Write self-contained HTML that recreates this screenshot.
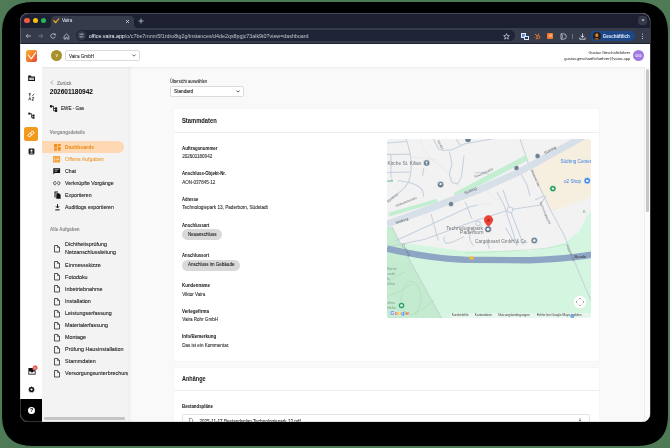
<!DOCTYPE html>
<html><head><meta charset="utf-8">
<style>
*{box-sizing:border-box;margin:0;padding:0}
html,body{width:670px;height:448px;overflow:hidden;background:#4f7a56;font-family:"Liberation Sans",sans-serif}
.a{position:absolute}
.t{position:absolute;white-space:nowrap;line-height:1;-webkit-text-stroke:0.1px currentColor}
.b,.lbl{-webkit-text-stroke:0.04px currentColor}
#frame{left:2px;top:2px;width:666px;height:444px;background:#000;border-radius:26px}
#win{left:20px;top:13px;width:630px;height:408.5px;border-radius:8px;overflow:hidden;background:#f9f9f9}
#P{left:-20px;top:-13px;width:670px;height:448px;will-change:transform}
.b{font-weight:700}
.nav{font-size:5.2px;color:#222}
.task{font-size:5.4px;color:#222}
.lbl{font-size:5.2px;font-weight:700;color:#222;transform-origin:0 0}
.val{font-size:4.55px;color:#333}
svg{position:absolute;overflow:visible}
</style></head>
<body>
<svg style="left:0;top:0" width="670" height="448" viewBox="0 0 670 448"><path d="M634.00 2.00 L638.02 2.04 L640.72 2.16 L643.05 2.36 L645.17 2.63 L647.13 2.99 L648.97 3.42 L650.69 3.94 L652.32 4.53 L653.85 5.20 L655.30 5.94 L656.67 6.77 L657.96 7.67 L659.17 8.64 L660.30 9.70 L661.36 10.83 L662.33 12.04 L663.23 13.33 L664.06 14.70 L664.80 16.15 L665.47 17.68 L666.06 19.31 L666.58 21.03 L667.01 22.87 L667.37 24.83 L667.64 26.95 L667.84 29.28 L667.96 31.98 L668.00 36.00 L668.00 412.00 L667.96 416.02 L667.84 418.72 L667.64 421.05 L667.37 423.17 L667.01 425.13 L666.58 426.97 L666.06 428.69 L665.47 430.32 L664.80 431.85 L664.06 433.30 L663.23 434.67 L662.33 435.96 L661.36 437.17 L660.30 438.30 L659.17 439.36 L657.96 440.33 L656.67 441.23 L655.30 442.06 L653.85 442.80 L652.32 443.47 L650.69 444.06 L648.97 444.58 L647.13 445.01 L645.17 445.37 L643.05 445.64 L640.72 445.84 L638.02 445.96 L634.00 446.00 L36.00 446.00 L31.98 445.96 L29.28 445.84 L26.95 445.64 L24.83 445.37 L22.87 445.01 L21.03 444.58 L19.31 444.06 L17.68 443.47 L16.15 442.80 L14.70 442.06 L13.33 441.23 L12.04 440.33 L10.83 439.36 L9.70 438.30 L8.64 437.17 L7.67 435.96 L6.77 434.67 L5.94 433.30 L5.20 431.85 L4.53 430.32 L3.94 428.69 L3.42 426.97 L2.99 425.13 L2.63 423.17 L2.36 421.05 L2.16 418.72 L2.04 416.02 L2.00 412.00 L2.00 36.00 L2.04 31.98 L2.16 29.28 L2.36 26.95 L2.63 24.83 L2.99 22.87 L3.42 21.03 L3.94 19.31 L4.53 17.68 L5.20 16.15 L5.94 14.70 L6.77 13.33 L7.67 12.04 L8.64 10.83 L9.70 9.70 L10.83 8.64 L12.04 7.67 L13.33 6.77 L14.70 5.94 L16.15 5.20 L17.68 4.53 L19.31 3.94 L21.03 3.42 L22.87 2.99 L24.83 2.63 L26.95 2.36 L29.28 2.16 L31.98 2.04 L36.00 2.00Z" fill="#000"/></svg>
<div id="win" class="a"><div id="P" class="a">
  <!-- ============ TAB BAR ============ -->
  <div class="a" style="left:20px;top:13px;width:630px;height:15px;background:#1d2030"></div>
  <div class="a" style="left:24px;top:17.9px;width:5.6px;height:5.6px;border-radius:50%;background:#f05a45"></div>
  <div class="a" style="left:32.7px;top:17.9px;width:5.6px;height:5.6px;border-radius:50%;background:#f5c30a"></div>
  <div class="a" style="left:40.6px;top:17.9px;width:5.6px;height:5.6px;border-radius:50%;background:#25b75a"></div>
  <!-- active tab -->
  <div class="a" style="left:47px;top:24px;width:91px;height:4.5px;background:#353b4b"></div>
  <div class="a" style="left:47px;top:20px;width:4px;height:8.2px;background:#1d2030;border-bottom-right-radius:4px"></div>
  <div class="a" style="left:134px;top:20px;width:4px;height:8.2px;background:#1d2030;border-bottom-left-radius:4px"></div>
  <div class="a" style="left:51px;top:16px;width:83px;height:13px;background:#353b4b;border-radius:4px 4px 0 0"></div>
  <svg style="left:53px;top:17.8px" width="6.5" height="5.5" viewBox="0 0 6.5 5.5"><defs><linearGradient id="fg" x1="0" y1="1" x2="1" y2="0"><stop offset="0" stop-color="#f7c51b"/><stop offset="1" stop-color="#f08a2a"/></linearGradient></defs><path d="M0.8 2.6 L2.6 4.6 L5.8 0.7" fill="none" stroke="url(#fg)" stroke-width="1.2" stroke-linecap="round" stroke-linejoin="round"/></svg>
  <div class="t" style="left:61.9px;top:18.9px;font-size:4.55px;color:#e3e6ec;-webkit-text-stroke:0.03px currentColor">Vaira</div>
  <svg style="left:125px;top:18.5px" width="5" height="5" viewBox="0 0 5 5"><path d="M1 1L4 4M4 1L1 4" stroke="#d8dbe2" stroke-width="0.8"/></svg>
  <svg style="left:137.5px;top:18px" width="6" height="6" viewBox="0 0 6 6"><path d="M3 0.5V5.5M0.5 3H5.5" stroke="#c8ccd5" stroke-width="0.8"/></svg>
  <div class="a" style="left:638.3px;top:16.2px;width:9px;height:9px;border-radius:3px;background:#343a4a"></div>
  <svg style="left:640.8px;top:19px" width="4" height="3" viewBox="0 0 4 3"><path d="M0.3 0.5L2 2.3L3.7 0.5" fill="#d0d4dc" /></svg>

  <!-- ============ TOOLBAR ============ -->
  <div class="a" style="left:20px;top:28px;width:630px;height:15.2px;background:#353b4b"></div>
  <div class="a" style="left:20px;top:43px;width:630px;height:1.2px;background:#1e2230"></div>
  <!-- nav icons -->
  <svg style="left:24.5px;top:33px" width="7" height="6" viewBox="0 0 7 6"><path d="M6 3H1.2M3.2 1L1.2 3L3.2 5" fill="none" stroke="#c9cdd6" stroke-width="0.75"/></svg>
  <svg style="left:37px;top:33px" width="7" height="6" viewBox="0 0 7 6"><path d="M1 3H5.8M3.8 1L5.8 3L3.8 5" fill="none" stroke="#7d8290" stroke-width="0.75"/></svg>
  <svg style="left:50.3px;top:33px" width="6" height="6" viewBox="0 0 6 6"><path d="M4.9 1.9A2.2 2.2 0 1 0 5.2 3.4" fill="none" stroke="#c9cdd6" stroke-width="0.75"/><path d="M3.7 0.9H5.3V2.5" fill="none" stroke="#c9cdd6" stroke-width="0.75"/></svg>
  <svg style="left:63px;top:32.5px" width="7" height="7" viewBox="0 0 7 7"><path d="M1.1 3.1L3.5 1L5.9 3.1V6.1H4.2V4.4H2.8V6.1H1.1Z" fill="none" stroke="#c9cdd6" stroke-width="0.75" stroke-linejoin="round"/></svg>
  <!-- omnibox -->
  <div class="a" style="left:76px;top:30px;width:439px;height:11.4px;border-radius:6px;background:#1f2536"></div>
  <div class="a" style="left:76.8px;top:31.3px;width:9px;height:9px;border-radius:50%;background:#343a4b"></div>
  <svg style="left:78.8px;top:33.3px" width="5" height="5" viewBox="0 0 5 5"><path d="M0.3 1.2H2.2M3.6 1.2H4.7M0.3 3.8H1.3M2.8 3.8H4.7" stroke="#c9cdd6" stroke-width="0.6"/><circle cx="2.9" cy="1.2" r="0.7" fill="none" stroke="#c9cdd6" stroke-width="0.5"/><circle cx="2.1" cy="3.8" r="0.7" fill="none" stroke="#c9cdd6" stroke-width="0.5"/></svg>
  <div class="t" style="left:88.7px;top:34px;font-size:5.35px;color:#c2c6cf;-webkit-text-stroke:0px currentColor"><span style="color:#f4f6fa">office.vaira.app</span>/o/c7be7mnm5f1rdro8tg2g/instances/d4de2qs8pgjc73alk9t0?view=dashboard</div>
  <svg style="left:503.3px;top:32.8px" width="7" height="7" viewBox="0 0 7 7"><path d="M3.5 0.6L4.3 2.6L6.4 2.7L4.8 4L5.3 6.2L3.5 5L1.7 6.2L2.2 4L0.6 2.7L2.7 2.6Z" fill="none" stroke="#d5d8df" stroke-width="0.7" stroke-linejoin="round"/></svg>
  <!-- extensions -->
  <div class="a" style="left:521.3px;top:33.4px;width:5px;height:4.5px;background:#5b8ee0;border:0.7px solid #dfe6f2"></div>
  <div class="a" style="left:524.2px;top:36.3px;width:4.5px;height:3.8px;background:#1f3a66;border:0.6px solid #dfe6f2"></div>
  <svg style="left:533.5px;top:32.5px" width="7" height="7" viewBox="0 0 7 7"><path d="M1 1L3.6 3.4M1.2 4.2L0.6 4.8M4.3 0.7V2.5M5.8 1.5" stroke="#f57a2a" stroke-width="0.9" fill="none"/><circle cx="4.3" cy="4.1" r="1.5" fill="none" stroke="#f57a2a" stroke-width="0.9"/><path d="M3.3 5.2L1.8 6.4" stroke="#f57a2a" stroke-width="0.9"/></svg>
  <div class="a" style="left:546.9px;top:32.8px;width:6.3px;height:6.3px;border-radius:1px;background:#f5782b"></div>
  <svg style="left:547.5px;top:33.4px" width="5" height="5" viewBox="0 0 5 5"><path d="M1 4L2.5 1L4 4M1.7 3H3.3" stroke="#fde2cf" stroke-width="0.6" fill="none"/></svg>
  <svg style="left:559.5px;top:32.8px" width="7" height="7" viewBox="0 0 7 7"><path d="M1 0.8H3.6A2.7 2.7 0 0 1 3.6 6.2H1Z" fill="none" stroke="#b8bcc5" stroke-width="0.9"/><path d="M1 0.8L2.4 2V5L1 6.2" fill="none" stroke="#b8bcc5" stroke-width="0.7"/></svg>
  <div class="a" style="left:572px;top:34px;width:0.7px;height:4.5px;background:#6a707d"></div>
  <svg style="left:578.5px;top:32.5px" width="7" height="7" viewBox="0 0 7 7"><path d="M3.5 0.5V4.3M1.8 2.8L3.5 4.4L5.2 2.8" fill="none" stroke="#d5d8df" stroke-width="0.9"/><path d="M0.8 4.6V6.2H6.2V4.6" fill="none" stroke="#d5d8df" stroke-width="0.9"/></svg>
  <!-- profile pill -->
  <div class="a" style="left:590px;top:30.8px;width:44.5px;height:10.7px;border-radius:5.4px;background:#1d4787"></div>
  <div class="a" style="left:593.1px;top:32.3px;width:7.6px;height:7.6px;border-radius:50%;background:#2a2016"></div>
  <svg style="left:593.1px;top:32.3px" width="7.6" height="7.6" viewBox="0 0 7.6 7.6"><ellipse cx="3.8" cy="3.2" rx="1.5" ry="1.9" fill="#d9853c"/><path d="M1.6 7.4Q3.8 4.6 6 7.4Z" fill="#b8652a"/></svg>
  <div class="t b" style="left:602.8px;top:35.30px;font-size:4.5px;color:#d6e3fb">Geschäftlich</div>
  <svg style="left:640.8px;top:33px" width="3" height="7" viewBox="0 0 3 7"><circle cx="1.5" cy="1" r="0.55" fill="#c9cdd6"/><circle cx="1.5" cy="3.2" r="0.55" fill="#c9cdd6"/><circle cx="1.5" cy="5.4" r="0.55" fill="#c9cdd6"/></svg>

  <!-- ============ APP HEADER ============ -->
  <div class="a" style="left:20px;top:44.2px;width:630px;height:22.8px;background:#fff"></div>
  <!-- logo -->
  <div class="a" style="left:25.8px;top:50px;width:11.4px;height:11.6px;border-radius:2px;background:linear-gradient(135deg,#f9b233 0%,#f0782c 55%,#e8403a 100%)"></div>
  <svg style="left:25.8px;top:50px" width="12" height="12" viewBox="0 0 12 12"><path d="M2.2 5L5.3 8.8L9.6 2.6" fill="none" stroke="#fff" stroke-width="1.15" stroke-linecap="round" stroke-linejoin="round" opacity="0.95"/></svg>
  <!-- org avatar -->
  <div class="a" style="left:51.3px;top:50.2px;width:11.2px;height:11.2px;border-radius:50%;background:#a8902a"></div>
  <div class="t b" style="left:55.4px;top:53.8px;font-size:4px;color:#f2ead2">V</div>
  <!-- org select -->
  <div class="a" style="left:65.4px;top:50.4px;width:74.3px;height:11.1px;border-radius:2px;background:#fff;border:0.6px solid #dcdcdc"></div>
  <div class="t" style="left:68.9px;top:54.7px;font-size:4.9px;color:#333;transform-origin:0 0;--w:25.1px;transform:scaleX(0.9455)">Vaira GmbH</div>
  <svg style="left:131.8px;top:54.4px" width="4" height="3" viewBox="0 0 4 3"><path d="M0.4 0.5L2 2.2L3.6 0.5" fill="none" stroke="#444" stroke-width="0.8"/></svg>
  <!-- user -->
  <div class="t" style="left:588.4px;top:51.2px;font-size:3.96px;color:#333;-webkit-text-stroke:0.02px currentColor">Gustav Geschäftsführer</div>
  <div class="t" style="left:564.3px;top:56.9px;font-size:4.05px;color:#333;-webkit-text-stroke:0.02px currentColor">gustav.geschaeftsfuehrer@vaira.app</div>
  <div class="a" style="left:633px;top:49.6px;width:11.4px;height:11.4px;border-radius:50%;background:#a07ae0"></div>
  <div class="t b" style="left:635.3px;top:53.6px;font-size:4px;color:#efe8fb">GG</div>

  <!-- ============ LEFT ICON STRIP ============ -->
  <div class="a" style="left:20px;top:67px;width:22.2px;height:355px;background:#fff"></div>
  <div class="a" style="left:20px;top:398.8px;width:22.2px;height:23px;background:#000"></div>
  
  <!-- strip icons -->
  <svg style="left:28px;top:75px" width="7.2" height="6.4" viewBox="0 0 7.2 6.4"><path d="M0.2 0.6H2.8L3.5 1.4H7V6H0.2Z" fill="#111"/><path d="M1.3 2.6H5.9V5H1.3Z" fill="#fff" opacity="0.85"/><path d="M3.2 3.8H5" stroke="#111" stroke-width="0.5"/></svg>
  <svg style="left:28px;top:92.8px" width="7" height="8" viewBox="0 0 7 8"><path d="M0.6 0.8H3M1.8 0.8V3.4M4.2 3.2L6.2 0.8M0.6 7.2L1.8 4.6L3 7.2M4.2 4.6H5.8L4.2 7.2H5.8" fill="none" stroke="#1a1a1a" stroke-width="0.75"/></svg>
  <svg style="left:28px;top:111.8px" width="7" height="7" viewBox="0 0 7 7"><rect x="0.3" y="0.6" width="2" height="2" fill="#1a1a1a"/><rect x="4.5" y="2.5" width="2" height="2" fill="#1a1a1a"/><rect x="4.5" y="4.7" width="2" height="2" fill="#1a1a1a"/><path d="M2 1.6H3.5V5.7H4.8M3.5 3.5H4.8" fill="none" stroke="#1a1a1a" stroke-width="0.7"/></svg>
  <div class="a" style="left:24.3px;top:127.2px;width:14px;height:14px;border-radius:2.5px;background:#f39a1e"></div>
  <svg style="left:27.3px;top:130.2px" width="8" height="8" viewBox="0 0 8 8"><g transform="rotate(-40 4 4)" fill="none" stroke="#fff" stroke-width="0.9"><rect x="0.6" y="2.7" width="3.8" height="2.6" rx="1.3"/><rect x="3.6" y="2.7" width="3.8" height="2.6" rx="1.3"/></g></svg>
  <svg style="left:28px;top:147.5px" width="7" height="7" viewBox="0 0 7 7"><rect x="0.6" y="0.6" width="5.8" height="5.8" rx="0.8" fill="#1a1a1a"/><circle cx="3.5" cy="2.7" r="1.1" fill="#fff"/><path d="M1.6 5.6Q3.5 3.6 5.4 5.6Z" fill="#fff"/></svg>
  <svg style="left:27.6px;top:364.6px" width="10" height="10" viewBox="0 0 10 10"><path d="M0.4 3H7.6V9.6H0.4Z" fill="#111"/><path d="M1.2 6.6H2.7L3.3 7.5H4.7L5.3 6.6H6.8V8.8H1.2Z" fill="#fff"/><circle cx="7.2" cy="2.8" r="2.5" fill="#e53935" stroke="#fff" stroke-width="0.4"/><path d="M6.5 1.7V4M7.9 1.7V4" stroke="#fff" stroke-width="0.5"/></svg>
  <svg style="left:28px;top:385.5px" width="7" height="7" viewBox="0 0 7 7"><path d="M3.5 0.2L4.3 1.2L5.6 1.1L5.7 2.4L6.8 3.1L6 4.1L6.3 5.4L5 5.6L4.4 6.8L3.5 6L2.6 6.8L2 5.6L0.7 5.4L1 4.1L0.2 3.1L1.3 2.4L1.4 1.1L2.7 1.2Z" fill="#111"/><circle cx="3.5" cy="3.5" r="1.1" fill="#fff"/></svg>
  <div class="a" style="left:27.9px;top:406.6px;width:7.4px;height:7.4px;border-radius:50%;background:#fff"></div>
  <div class="t b" style="left:29.9px;top:407.9px;font-size:5.2px;color:#000">?</div>


  <!-- ============ SECONDARY SIDEBAR ============ -->
  <div class="a" style="left:42.2px;top:67px;width:85.5px;height:355px;background:#f3f3f3"></div>
  <div class="a" style="left:127.7px;top:67px;width:4px;height:355px;background:linear-gradient(90deg,#ececec,rgba(249,249,249,0))"></div>
  
  <svg style="left:50.4px;top:80.4px" width="4" height="5" viewBox="0 0 4 5"><path d="M2.8 0.6L1 2.5L2.8 4.4" fill="none" stroke="#666" stroke-width="0.6"/></svg>
  <div class="t" style="left:56.9px;top:81.9px;font-size:4.78px;color:#7a7a7a">Zurück</div>
  <div class="t b" style="left:49.8px;top:88.8px;font-size:6.53px;color:#111">202601180942</div>
  <svg style="left:50.4px;top:104.5px" width="7.2" height="7" viewBox="0 0 7.2 7"><rect x="0" y="0.2" width="2.2" height="2.2" fill="#111"/><rect x="5" y="2.4" width="2.2" height="2.2" fill="#111"/><rect x="5" y="4.7" width="2.2" height="2.2" fill="#111"/><path d="M2 1.3H3.6V5.8H5M3.6 3.5H5" fill="none" stroke="#111" stroke-width="0.8"/></svg>
  <div class="t" style="left:61.4px;top:106.0px;font-size:5px;color:#222;transform-origin:0 0;--w:23px;transform:scaleX(0.9194)">EWE - Gas</div>
  <div class="t b" style="left:49.8px;top:130.60px;font-size:4.57px;color:#8a8a8a">Vorgangsdetails</div>
  <div class="a" style="left:42.2px;top:141.1px;width:81.8px;height:12px;border-radius:0 6px 6px 0;background:#fdd8b2"></div>
  <svg style="left:53.6px;top:143.5px" width="7" height="7" viewBox="0 0 7 7"><rect x="0" y="0" width="3" height="3.6" fill="#ef8f1a"/><rect x="3.7" y="0" width="3" height="2" fill="#ef8f1a"/><rect x="0" y="4.3" width="3" height="2.3" fill="#ef8f1a"/><rect x="3.7" y="2.7" width="3" height="3.9" fill="#ef8f1a"/></svg>
  <div class="t b" style="left:65.1px;top:144.5px;font-size:5.03px;color:#e98c17">Dashboards</div>
  <svg style="left:53.4px;top:155.8px" width="7.2" height="6.4" viewBox="0 0 7.2 6.4"><rect x="0" y="0" width="7.2" height="6.4" rx="0.6" fill="#f2a33c"/><path d="M1.5 1.6V4.8M2.8 3.2H5.6M4.6 2.2L5.7 3.2L4.6 4.2" fill="none" stroke="#fff" stroke-width="0.6"/></svg>
  <div class="t" style="left:65.1px;top:156.70px;font-size:5.2px;color:#f0a03a">Offene Aufgaben</div>
  <svg style="left:53.1px;top:167.8px" width="7.4" height="6.6" viewBox="0 0 7.4 6.6"><path d="M0.3 0.3H7.1V5H1.6L0.3 6.4Z" fill="#111"/><path d="M1.6 1.7H5.6M1.6 3.2H4.2" stroke="#fff" stroke-width="0.6"/></svg>
  <div class="t nav" style="left:65.1px;top:169.40px">Chat</div>
  <svg style="left:53px;top:181px" width="7.6" height="4.4" viewBox="0 0 7.6 4.4"><path d="M3 0.6H2.2A1.6 1.6 0 0 0 2.2 3.8H3M4.6 0.6H5.4A1.6 1.6 0 0 1 5.4 3.8H4.6M2.4 2.2H5.2" fill="none" stroke="#222" stroke-width="0.7"/></svg>
  <div class="t nav" style="left:65.1px;top:180.6px">Verknüpfte Vorgänge</div>
  <svg style="left:53.5px;top:191px" width="7" height="8" viewBox="0 0 7 8"><path d="M0.5 0.5H4V1.5H1.5V6.5H0.5Z" fill="#111"/><path d="M2.3 2.2H5L6.6 3.8V7.8H2.3Z" fill="#111"/></svg>
  <div class="t nav" style="left:65.1px;top:192.5px">Exportieren</div>
  <svg style="left:54.5px;top:204.2px" width="5" height="6.6" viewBox="0 0 5 6.6"><path d="M2.5 0.2V3.6M0.9 2.3L2.5 4L4.1 2.3" fill="none" stroke="#111" stroke-width="1"/><rect x="0.3" y="5.4" width="4.4" height="1" fill="#111"/></svg>
  <div class="t nav" style="left:65.1px;top:204.7px">Auditlogs exportieren</div>
  <div class="t b" style="left:50.1px;top:227.5px;font-size:4.43px;color:#8a8a8a">Alle Aufgaben</div>
  <div class="a" style="left:42.2px;top:236px;width:85.5px;height:183px;overflow:hidden">
  </div>
  <svg style="left:54.1px;top:244.95px" width="6" height="7.5" viewBox="0 0 6 7.5"><path d="M0.5 0.5H3.6L5.5 2.4V7H0.5Z" fill="none" stroke="#222" stroke-width="0.75" stroke-linejoin="round"/><path d="M3.5 0.5V2.5H5.5" fill="none" stroke="#222" stroke-width="0.6"/></svg>
  <svg style="left:54.1px;top:261.25px" width="6" height="7.5" viewBox="0 0 6 7.5"><path d="M0.5 0.5H3.6L5.5 2.4V7H0.5Z" fill="none" stroke="#222" stroke-width="0.75" stroke-linejoin="round"/><path d="M3.5 0.5V2.5H5.5" fill="none" stroke="#222" stroke-width="0.6"/></svg>
  <svg style="left:54.1px;top:273.35px" width="6" height="7.5" viewBox="0 0 6 7.5"><path d="M0.5 0.5H3.6L5.5 2.4V7H0.5Z" fill="none" stroke="#222" stroke-width="0.75" stroke-linejoin="round"/><path d="M3.5 0.5V2.5H5.5" fill="none" stroke="#222" stroke-width="0.6"/></svg>
  <svg style="left:54.1px;top:285.45px" width="6" height="7.5" viewBox="0 0 6 7.5"><path d="M0.5 0.5H3.6L5.5 2.4V7H0.5Z" fill="none" stroke="#222" stroke-width="0.75" stroke-linejoin="round"/><path d="M3.5 0.5V2.5H5.5" fill="none" stroke="#222" stroke-width="0.6"/></svg>
  <svg style="left:54.1px;top:297.55px" width="6" height="7.5" viewBox="0 0 6 7.5"><path d="M0.5 0.5H3.6L5.5 2.4V7H0.5Z" fill="none" stroke="#222" stroke-width="0.75" stroke-linejoin="round"/><path d="M3.5 0.5V2.5H5.5" fill="none" stroke="#222" stroke-width="0.6"/></svg>
  <svg style="left:54.1px;top:309.65px" width="6" height="7.5" viewBox="0 0 6 7.5"><path d="M0.5 0.5H3.6L5.5 2.4V7H0.5Z" fill="none" stroke="#222" stroke-width="0.75" stroke-linejoin="round"/><path d="M3.5 0.5V2.5H5.5" fill="none" stroke="#222" stroke-width="0.6"/></svg>
  <svg style="left:54.1px;top:321.75px" width="6" height="7.5" viewBox="0 0 6 7.5"><path d="M0.5 0.5H3.6L5.5 2.4V7H0.5Z" fill="none" stroke="#222" stroke-width="0.75" stroke-linejoin="round"/><path d="M3.5 0.5V2.5H5.5" fill="none" stroke="#222" stroke-width="0.6"/></svg>
  <svg style="left:54.1px;top:333.85px" width="6" height="7.5" viewBox="0 0 6 7.5"><path d="M0.5 0.5H3.6L5.5 2.4V7H0.5Z" fill="none" stroke="#222" stroke-width="0.75" stroke-linejoin="round"/><path d="M3.5 0.5V2.5H5.5" fill="none" stroke="#222" stroke-width="0.6"/></svg>
  <svg style="left:54.1px;top:345.95px" width="6" height="7.5" viewBox="0 0 6 7.5"><path d="M0.5 0.5H3.6L5.5 2.4V7H0.5Z" fill="none" stroke="#222" stroke-width="0.75" stroke-linejoin="round"/><path d="M3.5 0.5V2.5H5.5" fill="none" stroke="#222" stroke-width="0.6"/></svg>
  <svg style="left:54.1px;top:358.05px" width="6" height="7.5" viewBox="0 0 6 7.5"><path d="M0.5 0.5H3.6L5.5 2.4V7H0.5Z" fill="none" stroke="#222" stroke-width="0.75" stroke-linejoin="round"/><path d="M3.5 0.5V2.5H5.5" fill="none" stroke="#222" stroke-width="0.6"/></svg>
  <svg style="left:54.1px;top:370.15px" width="6" height="7.5" viewBox="0 0 6 7.5"><path d="M0.5 0.5H3.6L5.5 2.4V7H0.5Z" fill="none" stroke="#222" stroke-width="0.75" stroke-linejoin="round"/><path d="M3.5 0.5V2.5H5.5" fill="none" stroke="#222" stroke-width="0.6"/></svg>
  <div class="t task" style="left:65.1px;top:241.60px;max-width:62.6px;overflow:hidden">Dichtheitsprüfung</div>
  <div class="t task" style="left:65.1px;top:250.10px;max-width:62.6px;overflow:hidden">Netzanschlussleitung</div>
  <div class="t task" style="left:65.1px;top:262.50px;max-width:62.6px;overflow:hidden">Einmessskizze</div>
  <div class="t task" style="left:65.1px;top:274.60px;max-width:62.6px;overflow:hidden">Fotodoku</div>
  <div class="t task" style="left:65.1px;top:286.70px;max-width:62.6px;overflow:hidden">Inbetriebnahme</div>
  <div class="t task" style="left:65.1px;top:298.80px;max-width:62.6px;overflow:hidden">Installation</div>
  <div class="t task" style="left:65.1px;top:310.90px;max-width:62.6px;overflow:hidden">Leistungserfassung</div>
  <div class="t task" style="left:65.1px;top:323.00px;max-width:62.6px;overflow:hidden">Materialerfassung</div>
  <div class="t task" style="left:65.1px;top:335.10px;max-width:62.6px;overflow:hidden">Montage</div>
  <div class="t task" style="left:65.1px;top:347.20px;max-width:62.6px;overflow:hidden">Prüfung Hausinstallation</div>
  <div class="t task" style="left:65.1px;top:359.30px;max-width:62.6px;overflow:hidden">Stammdaten</div>
  <div class="t task" style="left:65.1px;top:371.40px;max-width:62.6px;overflow:hidden">Versorgungsunterbrechung</div>
  <div class="a" style="left:44px;top:417.4px;width:81.2px;height:2.4px;border-radius:1.2px;background:#c5c5c5"></div>


  <!-- ============ MAIN ============ -->
  
  <div class="t" style="left:170.1px;top:80.3px;font-size:4.8px;color:#333;transform-origin:0 0;--w:37.2px;transform:scaleX(0.8354)">Übersicht auswählen</div>
  <div class="a" style="left:170.1px;top:85.7px;width:73.6px;height:11.5px;border-radius:2px;background:#fff;border:0.6px solid #dcdcdc"></div>
  <div class="t" style="left:173.6px;top:88.6px;font-size:5px;color:#222;transform-origin:0 0;--w:19.1px;transform:scaleX(0.9410)">Standard</div>
  <svg style="left:236.4px;top:89.9px" width="4" height="3" viewBox="0 0 4 3"><path d="M0.4 0.5L2 2.2L3.6 0.5" fill="none" stroke="#333" stroke-width="0.8"/></svg>
  <!-- card 1 -->
  <div class="a" style="left:173.5px;top:109.4px;width:425.6px;height:251.4px;background:#fff;border-radius:2px;box-shadow:0 0 2px rgba(0,0,0,0.06)"></div>
  <div class="a" style="left:173.5px;top:131.8px;width:425.6px;height:0.7px;background:#eeeeee"></div>
  <div class="t b" style="left:182.2px;top:117.6px;font-size:6.5px;color:#222;transform-origin:0 0;--w:34.8px;transform:scaleX(0.8920)">Stammdaten</div>
  <div class="t lbl" style="left:182px;top:145.80px;--w:35.5px;transform:scaleX(0.8493)">Auftragsnummer</div>
  <div class="t val" style="left:182.2px;top:155.1px">202601180942</div>
  <div class="t lbl" style="left:182px;top:171.20px;--w:43.9px;transform:scaleX(0.8320)">Anschluss-Objekt-Nr.</div>
  <div class="t val" style="left:182.2px;top:180.70px">AON-037845-12</div>
  <div class="t lbl" style="left:182px;top:196.80px;--w:16.2px;transform:scaleX(0.7908)">Adresse</div>
  <div class="t val" style="left:182.2px;top:206.30px;font-size:4.66px">Technologiepark 13, Paderborn, Südstadt</div>
  <div class="t lbl" style="left:182px;top:222.70px;--w:27.3px;transform:scaleX(0.8304)">Anschlussart</div>
  <div class="a" style="left:182.1px;top:229.3px;width:39.8px;height:11px;border-radius:5.5px;background:#d9d9d9"></div>
  <div class="t val" style="left:187.9px;top:233.00px;font-size:4.9px;color:#222;transform-origin:0 0;--w:28.5px;transform:scaleX(0.9273)">Neuanschluss</div>
  <div class="t lbl" style="left:182px;top:252.80px;--w:27.1px;transform:scaleX(0.8173)">Anschlussort</div>
  <div class="a" style="left:182.1px;top:259.5px;width:57.9px;height:11px;border-radius:5.5px;background:#d9d9d9"></div>
  <div class="t val" style="left:187.9px;top:263.10px;font-size:4.9px;color:#222;transform-origin:0 0;--w:46.4px;transform:scaleX(0.9225)">Anschluss im Gebäude</div>
  <div class="t lbl" style="left:182px;top:283.00px;--w:28px;transform:scaleX(0.8521)">Kundenname</div>
  <div class="t val" style="left:182.2px;top:292.90px">Viktor Vaira</div>
  <div class="t lbl" style="left:182px;top:308.50px;--w:26.9px;transform:scaleX(0.8634)">Verlegefirma</div>
  <div class="t val" style="left:182.2px;top:318.20px">Vaira Rohr GmbH</div>
  <div class="t lbl" style="left:182px;top:333.70px;--w:34.3px;transform:scaleX(0.8684)">Info/Bemerkung</div>
  <div class="t val" style="left:182.2px;top:343.50px">Das ist ein Kommentar.</div>

  <!-- card 2 -->
  <div class="a" style="left:173.5px;top:367.6px;width:425.6px;height:60px;background:#fff;border-radius:2px;box-shadow:0 0 2px rgba(0,0,0,0.06)"></div>
  <div class="a" style="left:173.5px;top:390.4px;width:425.6px;height:0.7px;background:#eeeeee"></div>
  <div class="t b" style="left:182.1px;top:376.4px;font-size:6.4px;color:#222;transform-origin:0 0;--w:23.6px;transform:scaleX(0.8631)">Anhänge</div>
  <div class="t lbl" style="left:182.2px;top:403.90px;--w:30.9px;transform:scaleX(0.8373)">Bestandspläne</div>
  <div class="a" style="left:181.7px;top:413.8px;width:408.6px;height:14px;border-radius:2px;border:0.6px solid #e4e4e4;background:#fff"></div>
  <svg style="left:188.8px;top:418.4px" width="4" height="5" viewBox="0 0 4 5"><path d="M0.4 0.4H2.5L3.6 1.5V4.6H0.4Z" fill="none" stroke="#555" stroke-width="0.6"/></svg>
  <div class="t val" style="left:199.4px;top:419.6px;color:#333;font-size:4.62px">2025-11-17 Bestandsplan Technologiepark 13.pdf</div>
  <svg style="left:577.8px;top:417.6px" width="4" height="5" viewBox="0 0 4 5"><path d="M2 0.3V3M0.9 2L2 3.1L3.1 2M0.5 4.3H3.5" fill="none" stroke="#444" stroke-width="0.6"/></svg>
  
  <div class="a" style="left:387px;top:139px;width:204px;height:179px;border-radius:3px;overflow:hidden">
  <svg style="left:0;top:0" width="204" height="179" viewBox="387 139 204 179">
    <rect x="387" y="139" width="204" height="179" fill="#f2f2f2"/>
    <!-- beige block -->
    <path d="M530 167 L578 137 L592 137 L592 196.6 L551 211.4 L541.3 194 Z" fill="#f6eedf"/>
    <!-- park light -->
    <path d="M387 318 L592 318 L592 209 L586.6 216.8 L579.3 231.3 L564.8 242.9 L544.5 248.7 L530 250.9 L465 251.2 L435 247.2 L400 242.5 L392 227 L387 227 Z" fill="#d4f6e0"/>
    <!-- park dark (left of Querweg) -->
    <path d="M387 227 L392 227 L400 242.5 L441.5 318 L387 318 Z" fill="#c6ecd2"/>
    <path d="M410 262 L441.5 318 L387 318 L387 262 Z" fill="#c4ead0"/>
    <!-- green trails -->
    <path d="M404 287 Q398 300 404 312 Q414 320 420 306 Q424 290 414 282 Q408 279 404 287Z" fill="none" stroke="#a9dcb9" stroke-width="0.6"/>
    <path d="M387 297 Q400 292 413 283 M415 314 Q428 305 434 300 M387 283 Q395 276 405 272" fill="none" stroke="#a9dcb9" stroke-width="0.6"/>
    <!-- minor roads -->
    <g fill="none" stroke="#e2e4e6" stroke-width="0.6">
      <path d="M420 139 L424 150.4 L432 159.8 L442.6 167.8 L450.7 175.9 L457.4 184 L462 190"/>
      <path d="M411.8 157.1 L436 159.8"/>
      <path d="M487 190 L492 198 L500 200 M480 205 L492 203"/>
    </g>
    <g fill="none" stroke="#c6d1de" stroke-width="1.05">
      <path d="M406 139 C412 155 413 172 408 183 C404 190 395 196 387 201"/>
      <path d="M387 143 L405.8 141.5"/>
      <path d="M387 154.4 L411 154.2"/>
      <path d="M391 154.4 V178"/>
      <path d="M387 172.5 L410 172"/>
      <path d="M423.9 167.8 L422.5 176"/>
      <path d="M397.7 180.6 Q405 182 411.8 183.2 Q420 186 422.5 190.6 L423.9 197"/>
      <path d="M433.3 139 L438.6 149 L442.6 150.4 L452 149.7 L465 143.7 L492 139"/>
      <path d="M456 139 L460 145"/>
      <path d="M449.3 151.7 L452 163.8 L449.3 174.5 L452 182.6 L457.4 184 L461.4 177.2 L464 155.8"/>
      <path d="M475 173 Q482 171 489 174"/>
      <path d="M431 213.8 L438.4 240.6"/>
      <path d="M425 227.2 L469.2 207.1 L478 205"/>
      <path d="M387 247 L425 239.2 L476 220.5 L510 209.8 L540 205 L546 196"/>
      <path d="M395 241 L425 227.2"/>
      <path d="M465.2 201.7 L472 219.1"/>
      <path d="M503 190 L510 209.8 L523.6 245"/>
      <path d="M497 192 L504 205 L517 245"/>
      <path d="M445.1 236.6 Q442 240 446 243 Q450 244 463.9 236.6"/>
      <path d="M486.7 239.2 L489.3 248.6"/>
      <path d="M474 226 L470 234 Q468 240 474 246"/>
      <path d="M505.7 227.4 Q512 240 517.6 245.3"/>
      <path d="M520 172 L527 185 L530 196"/>
    </g>
    <circle cx="510" cy="209.8" r="2.8" fill="#f2f2f2" stroke="#c6d1de" stroke-width="1.05"/>
    <circle cx="478" cy="223.5" r="2.3" fill="#f2f2f2" stroke="#c6d1de" stroke-width="1.05"/>
    <!-- Husener Str / Technologiepark -->
    <path d="M520 139 L530 168 L544 196 L551 211 L564 235 L580 275 L592 303" fill="none" stroke="#c3cfdc" stroke-width="1"/>
    <path d="M535 200 L544 196" fill="none" stroke="#c3cfdc" stroke-width="1"/>
    <path d="M465 253 Q520 251 544 248.5 Q560 246 566 244" fill="none" stroke="#a9dcb9" stroke-width="0.5"/>
    <!-- Querweg -->
    <path d="M392 227 L400 242.5 L441.5 318" fill="none" stroke="#b9c7c9" stroke-width="0.7"/>
    <!-- green strips along Suedring -->
    <path d="M389 214.6 L437 200.6" stroke="#c4eed2" stroke-width="4" fill="none"/>
    <path d="M455 195.5 L527 157.5" stroke="#c4eed2" stroke-width="5.5" fill="none"/>
    <!-- Suedring -->
    <path d="M387 224 L430 208.5 L480 189.5 L520 171.5 L560 149.5 L586 135" fill="none" stroke="#d7dfe9" stroke-width="6.8"/>
    <!-- highway -->
    <path d="M387 246 L387 251.5 Q430 262 465 262.8 L530 263.2 Q570 261 592 257.3 L592 251 Q570 255 530 257 L465 256.6 Q430 255 387 246Z" fill="#d9f3e2"/>
    <path d="M387 248.6 Q430 258.5 465 259.8 L530 260.3 Q570 258.5 592 254.5" fill="none" stroke="#8ea5c4" stroke-width="6.4"/>
    <rect x="469.5" y="256.6" width="4" height="3" rx="0.6" fill="#f5c02f"/>
    <!-- labels -->
    <g font-family="Liberation Sans" fill="#6f7378">
      <text x="387.5" y="165.4" font-size="4.8">Kirche St. Kilian</text>
      <text x="446.3" y="229.8" font-size="5.05">Technologiepark</text>
      <text x="460.1" y="234.3" font-size="5.05">Paderborn</text>
      <text x="475.1" y="242.5" font-size="4.7">Cargoboard GmbH &amp; Co.</text>
      <text font-size="3.8" transform="translate(396 224) rotate(-18)" fill="#555">Südring</text>
      <text font-size="3.8" transform="translate(465 194.5) rotate(-24)" fill="#555">Südring</text>
      <text font-size="3.8" transform="translate(545 154.5) rotate(-29)" fill="#555">Südring</text>
      <text font-size="3.4" transform="translate(475 178) rotate(-24)">Roseni­straße</text>
      <text font-size="3.2" transform="translate(388 203) rotate(-38)">Samtholz</text>
      <text font-size="3.2" transform="translate(396 207) rotate(-22)">Hildegardstraße</text>
      <text font-size="3.4" transform="translate(437 141) rotate(60)">Straße</text>
      <text font-size="3.4" transform="translate(531 170) rotate(68)">Husener Str.</text>
      <text font-size="3.4" transform="translate(539 202) rotate(66)">Technologiepark</text>
      <text font-size="3.4" transform="translate(402 244.5) rotate(60)">Querweg</text>
      <text font-size="3.4" transform="translate(566 245) rotate(68)">Husener Str.</text>
      <text x="574.5" y="257.8" font-size="4" fill="#333">Bunde</text>
      <text x="387.3" y="270" font-size="3.5" fill="#7a9a85">fläche</text>
      <text x="387.3" y="275" font-size="3.5" fill="#7a9a85">unde</text>
      <text x="387.3" y="280" font-size="3.5" fill="#7a9a85">le</text>
      <text x="387.3" y="285" font-size="3.5" fill="#7a9a85">elino</text>
      <text x="387.3" y="304" font-size="3.5" fill="#7a9a85">elino</text>
      <text x="387.3" y="309" font-size="3.5" fill="#7a9a85">Hehe</text>
      <text x="387.3" y="181.5" font-size="4" fill="#3aa760">adt</text>
      <text x="560.5" y="162.8" font-size="4.6" fill="#3b82e6">Südring Center</text>
      <text x="564" y="182.8" font-size="4.6" fill="#3b82e6">o2 Shop</text>
      <text x="583" y="213" font-size="4" fill="#3aa760">K</text>
    </g>
    <!-- POIs -->
    <g>
      <circle cx="426.6" cy="163" r="3.3" fill="#6c7f93" stroke="#fff" stroke-width="0.6"/>
      <path d="M426.6 161V165.2M425.3 162.4H427.9" stroke="#fff" stroke-width="0.6"/>
      <circle cx="440.6" cy="184.6" r="3.3" fill="#6c7f93" stroke="#fff" stroke-width="0.6"/>
      <path d="M438.8 184L440.6 183L442.4 184L440.6 185Z" fill="#fff"/>
      <circle cx="468" cy="139.5" r="2.8" fill="#6c7f93"/>
      <circle cx="451" cy="204" r="2.6" fill="#6c7f93" stroke="#fff" stroke-width="0.5"/>
      <circle cx="516.5" cy="168" r="2.6" fill="#6c7f93" stroke="#fff" stroke-width="0.5"/>
      <circle cx="537.6" cy="156" r="2.6" fill="#6c7f93" stroke="#fff" stroke-width="0.5"/>
      <circle cx="395" cy="145.5" r="0" fill="#6c7f93"/>
      <circle cx="552.9" cy="188.6" r="3.2" fill="#1e9e57" stroke="#fff" stroke-width="0.6"/>
      <circle cx="552.9" cy="188.6" r="1.2" fill="#fff"/>
      <circle cx="587.2" cy="180.7" r="3.2" fill="#3b82e6" stroke="#fff" stroke-width="0.6"/>
      <rect x="586" y="179.8" width="2.4" height="2" fill="#fff"/>
      <circle cx="534.3" cy="240.5" r="3.3" fill="#6c7f93" stroke="#fff" stroke-width="0.6"/>
      <circle cx="534.3" cy="240.5" r="1.3" fill="#fff"/>
      <circle cx="401.5" cy="305.5" r="3.2" fill="#1e9e57" stroke="#fff" stroke-width="0.6"/>
      <circle cx="401.5" cy="305.5" r="1.3" fill="#fff"/>
      <!-- target marker -->
      <circle cx="488.1" cy="229.3" r="3.3" fill="#5f7389" stroke="#fff" stroke-width="0.5"/>
      <circle cx="488.1" cy="229.3" r="1.4" fill="#fff"/>
      <path d="M488.5 226.8 C486.5 224.3 483.9 222.6 483.9 219.9 A4.6 4.6 0 0 1 493.1 219.9 C493.1 222.6 490.5 224.3 488.5 226.8Z" fill="#ea4335"/>
      <path d="M486.6 221.3L488.5 218.6L490.4 221.3Z" fill="#b3261e"/>
    </g>
    <!-- google logo -->
    <g font-family="Liberation Sans" font-size="5.6" font-weight="700" stroke="#fff" stroke-width="0.5" paint-order="stroke">
      <text x="390.2" y="315.4" fill="#4285f4">G</text>
      <text x="394.6" y="315.4" fill="#ea4335">o</text>
      <text x="397.8" y="315.4" fill="#fbbc05">o</text>
      <text x="401" y="315.4" fill="#4285f4">g</text>
      <text x="404.3" y="315.4" fill="#34a853">l</text>
      <text x="405.9" y="315.4" fill="#ea4335">e</text>
    </g>
    <!-- attribution -->
    <rect x="450.6" y="312.9" width="141" height="5.2" fill="#f2f6f3" opacity="0.6"/>
    <g font-family="Liberation Sans" font-size="3.15" fill="#3a3a3a">
      <text x="451.7" y="316.3">Kurzbefehle</text>
      <text x="474.8" y="316.3">Kartendaten</text>
      <text x="498.2" y="316.3">Nutzungsbedingungen</text>
      <text x="536.7" y="316.3">Fehler bei Google Maps melden</text>
    </g>
    <circle cx="572.3" cy="316.3" r="2" fill="#5b9be6" opacity="0.8"/>
    <!-- fullscreen -->
    <circle cx="580" cy="302" r="6.4" fill="#fff" stroke="#e4e4e4" stroke-width="0.4"/>
    <path d="M578.7 299.3L580 298L581.3 299.3 M578.7 304.7L580 306L581.3 304.7 M577.3 300.7L576 302L577.3 303.3 M582.7 300.7L584 302L582.7 303.3" fill="none" stroke="#666" stroke-width="0.55"/>
  </svg>
  </div>



  <div class="a" style="left:42.2px;top:67px;width:601.4px;height:1.6px;background:linear-gradient(180deg,rgba(0,0,0,0.05),rgba(0,0,0,0))"></div>
  <!-- scrollbar -->
  <div class="a" style="left:643.6px;top:67px;width:6.4px;height:355px;background:#fbfbfb;border-left:0.5px solid #ececec"></div>
  <div class="a" style="left:646.1px;top:69px;width:3px;height:143.4px;border-radius:1.5px;background:#c6c6c6"></div>
</div></div>
<div class="a" style="left:19.5px;top:12.5px;width:631px;height:409.5px;border-radius:8.5px;border:0.6px solid rgba(160,165,175,0.3)"></div>
</body></html>
